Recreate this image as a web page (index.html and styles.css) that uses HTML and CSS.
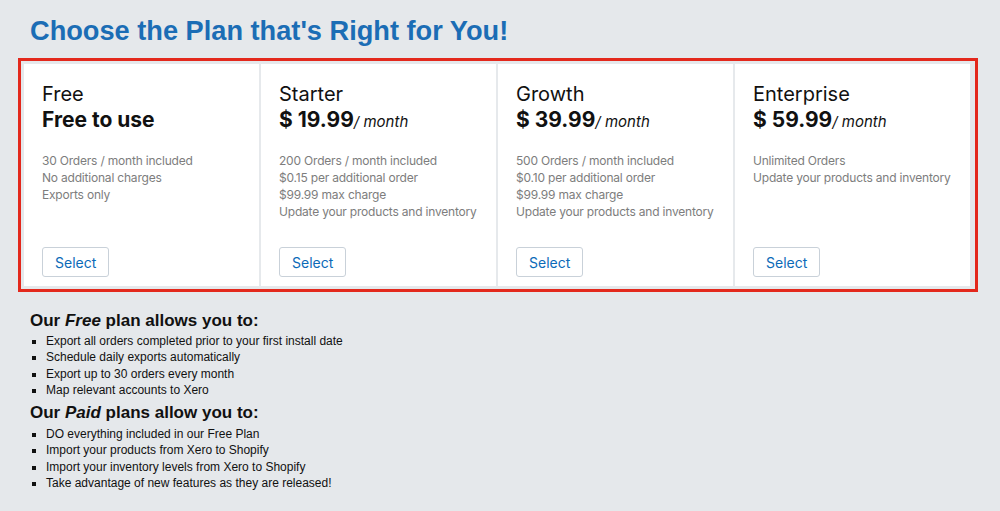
FILE: index.html
```
<!DOCTYPE html>
<html>
<head>
<meta charset="utf-8">
<link rel="stylesheet" href="styles.css">
</head>
<body>
<h1 class="title">Choose the Plan that's Right for You!</h1>
<div class="plans">
  <div class="card">
    <div class="name">Free</div>
    <div class="price"><b>Free to use</b></div>
    <ul class="features">
      <li>30 Orders / month included</li>
      <li>No additional charges</li>
      <li>Exports only</li>
    </ul>
    <button class="select">Select</button>
  </div>
  <div class="card">
    <div class="name">Starter</div>
    <div class="price"><b>$ 19.99</b><i>/ month</i></div>
    <ul class="features">
      <li>200 Orders / month included</li>
      <li>$0.15 per additional order</li>
      <li>$99.99 max charge</li>
      <li>Update your products and inventory</li>
    </ul>
    <button class="select">Select</button>
  </div>
  <div class="card">
    <div class="name">Growth</div>
    <div class="price"><b>$ 39.99</b><i>/ month</i></div>
    <ul class="features">
      <li>500 Orders / month included</li>
      <li>$0.10 per additional order</li>
      <li>$99.99 max charge</li>
      <li>Update your products and inventory</li>
    </ul>
    <button class="select">Select</button>
  </div>
  <div class="card">
    <div class="name">Enterprise</div>
    <div class="price"><b>$ 59.99</b><i>/ month</i></div>
    <ul class="features">
      <li>Unlimited Orders</li>
      <li>Update your products and inventory</li>
    </ul>
    <button class="select">Select</button>
  </div>
</div>
<div class="info">
  <h2>Our <i>Free</i> plan allows you to:</h2>
  <ul>
    <li>Export all orders completed prior to your first install date</li>
    <li>Schedule daily exports automatically</li>
    <li>Export up to 30 orders every month</li>
    <li>Map relevant accounts to Xero</li>
  </ul>
  <h2>Our <i>Paid</i> plans allow you to:</h2>
  <ul class="paid">
    <li>DO everything included in our Free Plan</li>
    <li>Import your products from Xero to Shopify</li>
    <li>Import your inventory levels from Xero to Shopify</li>
    <li>Take advantage of new features as they are released!</li>
  </ul>
</div>
</body>
</html>
```
FILE: styles.css
```
html, body {
  margin: 0;
  padding: 0;
}
body {
  background: #e5e8eb;
  font-family: "Liberation Sans", Arial, sans-serif;
  color: #111;
  padding: 14px 0 0 0;
}
.title {
  margin: 0 0 10px 30px;
  font-size: 27.2px;
  line-height: 34px;
  font-weight: bold;
  color: #1b6db5;
}
.plans {
  margin-left: 18px;
  width: 960px;
  box-sizing: border-box;
  border: 3px solid #e3281c;
  padding: 2px;
  display: grid;
  grid-template-columns: repeat(4, 237px);
}
.card {
  background: #fff;
  border: 1px solid #e6e9ec;
  padding: 18px 4px 10px 18px;
  display: flex;
  flex-direction: column;
  height: 224px;
  box-sizing: border-box;
  font-family: Inter, "Noto Sans", sans-serif;
}
.name {
  font-size: 20px;
  line-height: 24px;
  color: #111;
}
.price {
  font-size: 21px;
  line-height: 28px;
  height: 28px;
  color: #111;
}
.price b {
  font-weight: 700;
}
.price i {
  font-size: 15px;
  line-height: 0;
  font-style: italic;
}
.features {
  list-style: none;
  margin: 18px 0 0 0;
  padding: 0;
  font-size: 12px;
  letter-spacing: -0.2px;
  line-height: 17px;
  color: #7d7d7d;
  flex: 1;
}
.select {
  align-self: flex-start;
  font-family: Inter, "Noto Sans", sans-serif;
  font-size: 14px;
  color: #0b6ab8;
  background: #fff;
  border: 1px solid #c9d1d9;
  border-radius: 3px;
  height: 30px;
  padding: 0 12px;
  margin-bottom: -1px;
}
.info {
  padding-left: 30px;
  margin-top: 18px;
}
.info h2 {
  margin: 0;
  font-size: 17px;
  line-height: 22px;
  font-weight: bold;
  color: #111;
}
.info ul {
  margin: 1px 0 4px 0;
  padding-left: 16px;
  list-style: square;
  font-size: 12px;
  line-height: 16.3px;
}
.info ul.paid {
  margin-top: 2px;
}
```
